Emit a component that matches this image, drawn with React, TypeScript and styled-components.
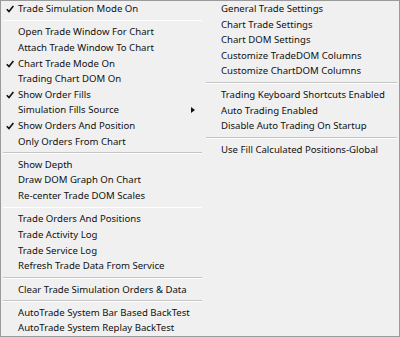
import React from "react";
import styled, { createGlobalStyle } from "styled-components";

const GlobalStyle = createGlobalStyle`
  html, body {
    margin: 0;
    padding: 0;
    background: #ffffff;
  }
  body {
    font-family: "Noto Sans", "Open Sans", sans-serif;
  }
`;

type Entry = { label?: string; checked?: boolean; submenu?: boolean; sep?: boolean };

const leftItems: Entry[] = [
  { label: "Trade Simulation Mode On", checked: true },
  { sep: true },
  { label: "Open Trade Window For Chart" },
  { label: "Attach Trade Window To Chart" },
  { label: "Chart Trade Mode On", checked: true },
  { label: "Trading Chart DOM On" },
  { label: "Show Order Fills", checked: true },
  { label: "Simulation Fills Source", submenu: true },
  { label: "Show Orders And Position", checked: true },
  { label: "Only Orders From Chart" },
  { sep: true },
  { label: "Show Depth" },
  { label: "Draw DOM Graph On Chart" },
  { label: "Re-center Trade DOM Scales" },
  { sep: true },
  { label: "Trade Orders And Positions" },
  { label: "Trade Activity Log" },
  { label: "Trade Service Log" },
  { label: "Refresh Trade Data From Service" },
  { sep: true },
  { label: "Clear Trade Simulation Orders & Data" },
  { sep: true },
  { label: "AutoTrade System Bar Based BackTest" },
  { label: "AutoTrade System Replay BackTest" },
];

const rightItems: Entry[] = [
  { label: "General Trade Settings" },
  { label: "Chart Trade Settings" },
  { label: "Chart DOM Settings" },
  { label: "Customize TradeDOM Columns" },
  { label: "Customize ChartDOM Columns" },
  { sep: true },
  { label: "Trading Keyboard Shortcuts Enabled" },
  { label: "Auto Trading Enabled" },
  { label: "Disable Auto Trading On Startup" },
  { sep: true },
  { label: "Use Fill Calculated Positions-Global" },
];

const Menu = styled.div`
  width: 400px;
  height: 337px;
  box-sizing: border-box;
  border: 1px solid #9a9a9a;
  background: #f0f0f0;
  display: flex;
  overflow: hidden;
`;

const Column = styled.div<{ $width?: number }>`
  display: flex;
  flex-direction: column;
  width: ${(p) => (p.$width ? `${p.$width}px` : "auto")};
  flex: ${(p) => (p.$width ? "none" : "1")};
`;

const Item = styled.div`
  position: relative;
  height: 15.6px;
  line-height: 15.6px;
  padding-left: 17px;
  font-size: 9.6px;
  color: #111;
  white-space: nowrap;
`;

const Check = styled.svg`
  position: absolute;
  left: 5px;
  top: 4px;
`;

const Arrow = styled.span`
  position: absolute;
  right: 9px;
  top: 4.5px;
  width: 0;
  height: 0;
  border-top: 3.5px solid transparent;
  border-bottom: 3.5px solid transparent;
  border-left: 4px solid #111;
`;

const Separator = styled.div`
  height: 1px;
  margin: 3px 2px 3px 2px;
  background: #c4c4c4;
  border-bottom: 1px solid #ffffff;
`;

function renderEntries(list: Entry[]) {
  return list.map((e, i) =>
    e.sep ? (
      <Separator key={i} />
    ) : (
      <Item key={i}>
        {e.checked && (
          <Check width="8" height="8" viewBox="0 0 8 8">
            <path d="M0.8 4.2 L3 6.6 L7.4 1" stroke="#111" strokeWidth="1.6" fill="none" />
          </Check>
        )}
        {e.label}
        {e.submenu && <Arrow />}
      </Item>
    )
  );
}

export default function App() {
  return (
    <>
      <GlobalStyle />
      <Menu>
        <Column $width={203}>{renderEntries(leftItems)}</Column>
        <Column>{renderEntries(rightItems)}</Column>
      </Menu>
    </>
  );
}
